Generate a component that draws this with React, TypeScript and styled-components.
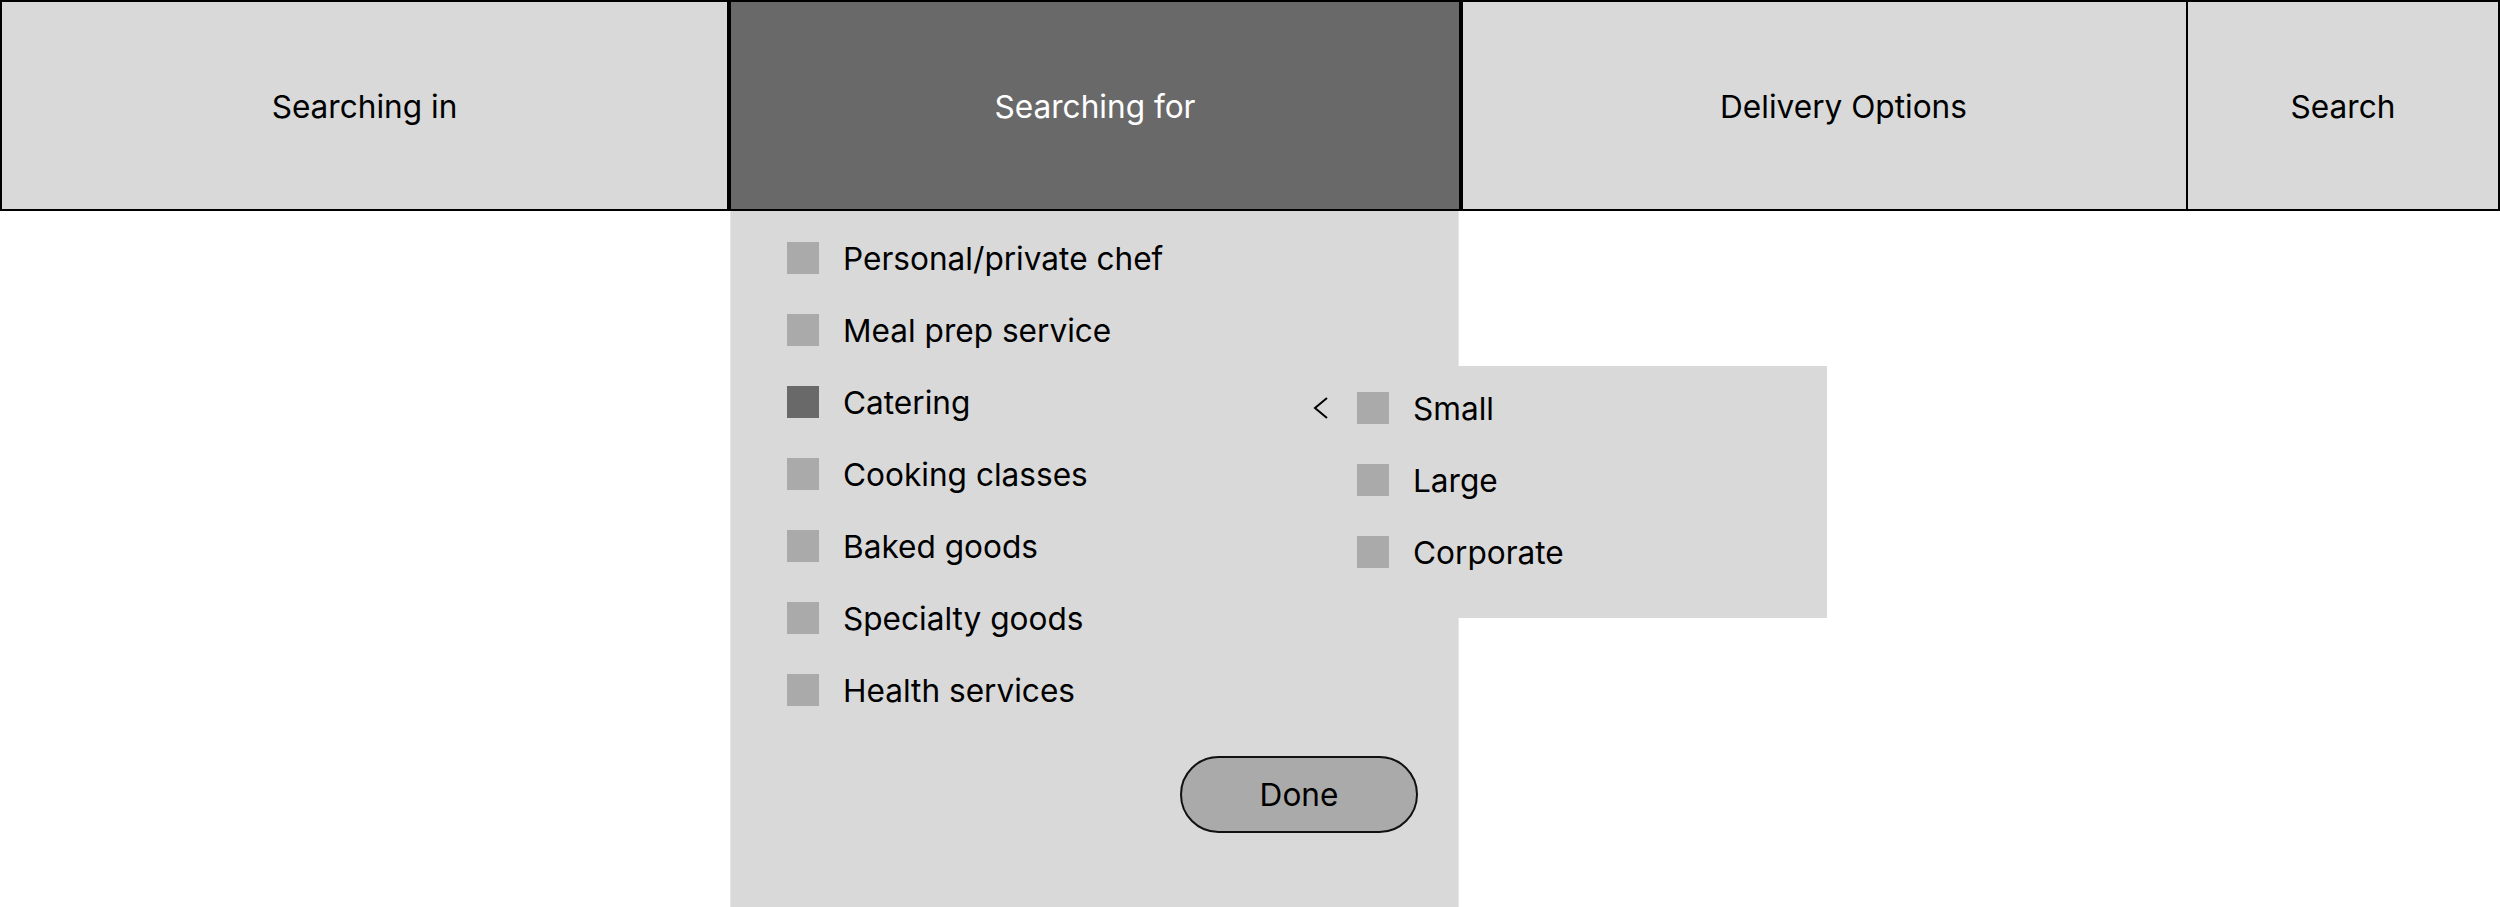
import styled, { createGlobalStyle } from "styled-components";

const Global = createGlobalStyle`
  body {
    margin: 0;
    padding: 0;
    background: #ffffff;
    font-family: Inter, "Noto Sans", sans-serif;
    overflow: hidden;
  }
`;

const Page = styled.div`
  display: grid;
  grid-template-columns: 729px 732px 727px 1fr;
  grid-template-rows: 211px 696px;
  width: 2500px;
`;

const Tab = styled.div<{ $active?: boolean; $noLeft?: boolean; $shift?: number }>`
  display: flex;
  align-items: center;
  justify-content: center;
  box-sizing: border-box;
  border: 2px solid #000000;
  border-left-width: ${(p) => (p.$noLeft ? "0" : "2px")};
  padding-left: ${(p) => p.$shift || 0}px;
  padding-top: 2px;
  background-color: ${(p) => (p.$active ? "#696969" : "#d9d9d9")};
  color: ${(p) => (p.$active ? "#ffffff" : "#000000")};
  font-size: 31.6px;
  font-weight: 400;
`;

const Panel = styled.div`
  grid-column: 2;
  grid-row: 2;
  position: relative;
  margin: 0 2px 0 1px;
  box-sizing: border-box;
  background-color: #d9d9d9;
  border-left: 1px solid #e6e6e6;
  border-right: 1px solid #e6e6e6;
  padding: 31px 40px 0 56px;
  display: flex;
  flex-direction: column;
`;

const List = styled.div`
  display: flex;
  flex-direction: column;
  gap: 40px;
`;

const Option = styled.label`
  display: flex;
  align-items: center;
  gap: 24px;
  height: 32px;
  font-size: 31.6px;
  color: #000000;
`;

const Box = styled.span<{ $checked?: boolean }>`
  display: block;
  width: 32px;
  height: 32px;
  flex: none;
  background-color: ${(p) => (p.$checked ? "#696969" : "#aaaaaa")};
`;

const Done = styled.button`
  align-self: flex-end;
  margin-top: 50px;
  width: 238px;
  height: 77px;
  box-sizing: border-box;
  border: 2px solid #111111;
  border-radius: 40px;
  background-color: #aaaaaa;
  font-family: Inter, "Noto Sans", sans-serif;
  font-size: 31.6px;
  color: #000000;
  padding: 0;
`;

const SubMenu = styled.div`
  position: absolute;
  left: 560px;
  top: 155px;
  width: 536px;
  box-sizing: border-box;
  padding: 26px 0 50px 22px;
  background-color: #d9d9d9;
  display: flex;
  flex-direction: column;
  gap: 40px;
`;

const SubRow = styled.div`
  display: flex;
  align-items: center;
  height: 32px;
`;

const Back = styled.span`
  width: 44px;
  flex: none;
  display: flex;
  align-items: center;
`;

const mainOptions = [
  { label: "Personal/private chef" },
  { label: "Meal prep service" },
  { label: "Catering", checked: true },
  { label: "Cooking classes" },
  { label: "Baked goods" },
  { label: "Specialty goods" },
  { label: "Health services" },
];

const subOptions = ["Small", "Large", "Corporate"];

const Chevron = () => (
  <svg width="16" height="22" viewBox="0 0 16 22">
    <polyline
      points="14,1 2,11 14,21"
      fill="none"
      stroke="#000"
      strokeWidth="2"
    />
  </svg>
);

const App = () => {
  return (
    <>
      <Global />
      <Page>
        <Tab>Searching in</Tab>
        <Tab $active>Searching for</Tab>
        <Tab $shift={38}>Delivery Options</Tab>
        <Tab $noLeft>Search</Tab>
        <Panel>
          <List>
            {mainOptions.map((o) => (
              <Option key={o.label}>
                <Box $checked={o.checked} />
                {o.label}
              </Option>
            ))}
          </List>
          <Done>Done</Done>
          <SubMenu>
            {subOptions.map((s, i) => (
              <SubRow key={s}>
                <Back>{i === 0 && <Chevron />}</Back>
                <Option>
                  <Box />
                  {s}
                </Option>
              </SubRow>
            ))}
          </SubMenu>
        </Panel>
      </Page>
    </>
  );
};
export default App;
